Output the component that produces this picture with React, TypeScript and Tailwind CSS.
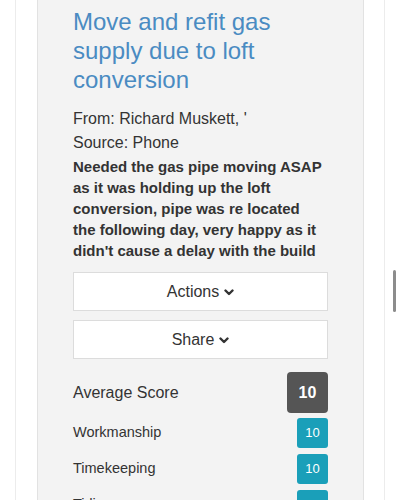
import React from 'react';

const scores = [
  { label: 'Workmanship', value: 10 },
  { label: 'Timekeeping', value: 10 },
  { label: 'Tidiness', value: 10 },
  { label: 'Value', value: 10 },
];

function Chevron() {
  return (
    <svg viewBox="0 0 10 7" className="w-[10px] h-[7px] mt-[2px]" fill="none" stroke="currentColor" strokeWidth="2.4" strokeLinecap="round" strokeLinejoin="round">
      <polyline points="1.5,1.5 5,5 8.5,1.5" />
    </svg>
  );
}

function DropButton({ label }: { label: string }) {
  return (
    <button className="w-full h-[39px] bg-white border border-[#dcdcdc] flex items-center justify-center gap-[5px] text-[16px] text-[#333]">
      {label}
      <Chevron />
    </button>
  );
}

export default function App() {
  return (
    <div className="relative h-[500px] overflow-hidden bg-white font-['Liberation_Sans',Arial,sans-serif]">
      {/* Outer card */}
      <div className="ml-[15px] w-[370px] min-h-full border-x border-[#ececec] pl-[21px] pr-[20px]">
        {/* Review panel */}
        <div className="bg-[#f3f3f3] border-x border-[#e2e2e2] pl-[35px] pr-[35px] pt-[7px] pb-6 min-h-[500px]">
          <h2 className="text-[24px] leading-[29px] text-[#4a8bc2]">
            Move and refit gas supply due to loft conversion
          </h2>

          <div className="mt-[13px] text-[16px] leading-[24px] text-[#333]">
            <p>From: Richard Muskett, '</p>
            <p>Source: Phone</p>
          </div>
          <p className="mt-[1px] w-[251px] text-[15px] leading-[21px] font-bold text-[#333]">
            Needed the gas pipe moving ASAP as it was holding up the loft conversion, pipe was re located the following day, very happy as it didn't cause a delay with the build
          </p>

          <div className="mt-[11px] flex flex-col gap-[9px]">
            <DropButton label="Actions" />
            <DropButton label="Share" />
          </div>

          {/* Scores */}
          <div className="mt-[13px] flex items-center justify-between">
            <span className="text-[16px] text-[#333]">Average Score</span>
            <span className="w-[41px] h-[41px] rounded-[4px] bg-[#555] text-white font-bold text-[16px] flex items-center justify-center">
              10
            </span>
          </div>
          <div className="mt-[5px] flex flex-col gap-[6px]">
            {scores.map((s) => (
              <div key={s.label} className="flex items-center justify-between">
                <span className="text-[14.5px] text-[#333]">{s.label}</span>
                <span className="w-[31px] h-[30px] rounded-[3px] bg-[#1a9fb9] text-white text-[13px] flex items-center justify-center">
                  {s.value}
                </span>
              </div>
            ))}
          </div>
        </div>
      </div>

      {/* Scroll indicator */}
      <div className="absolute left-[393px] top-[270px] w-[3px] h-[42px] rounded-full bg-[#8c8c8c]" />
    </div>
  );
}
